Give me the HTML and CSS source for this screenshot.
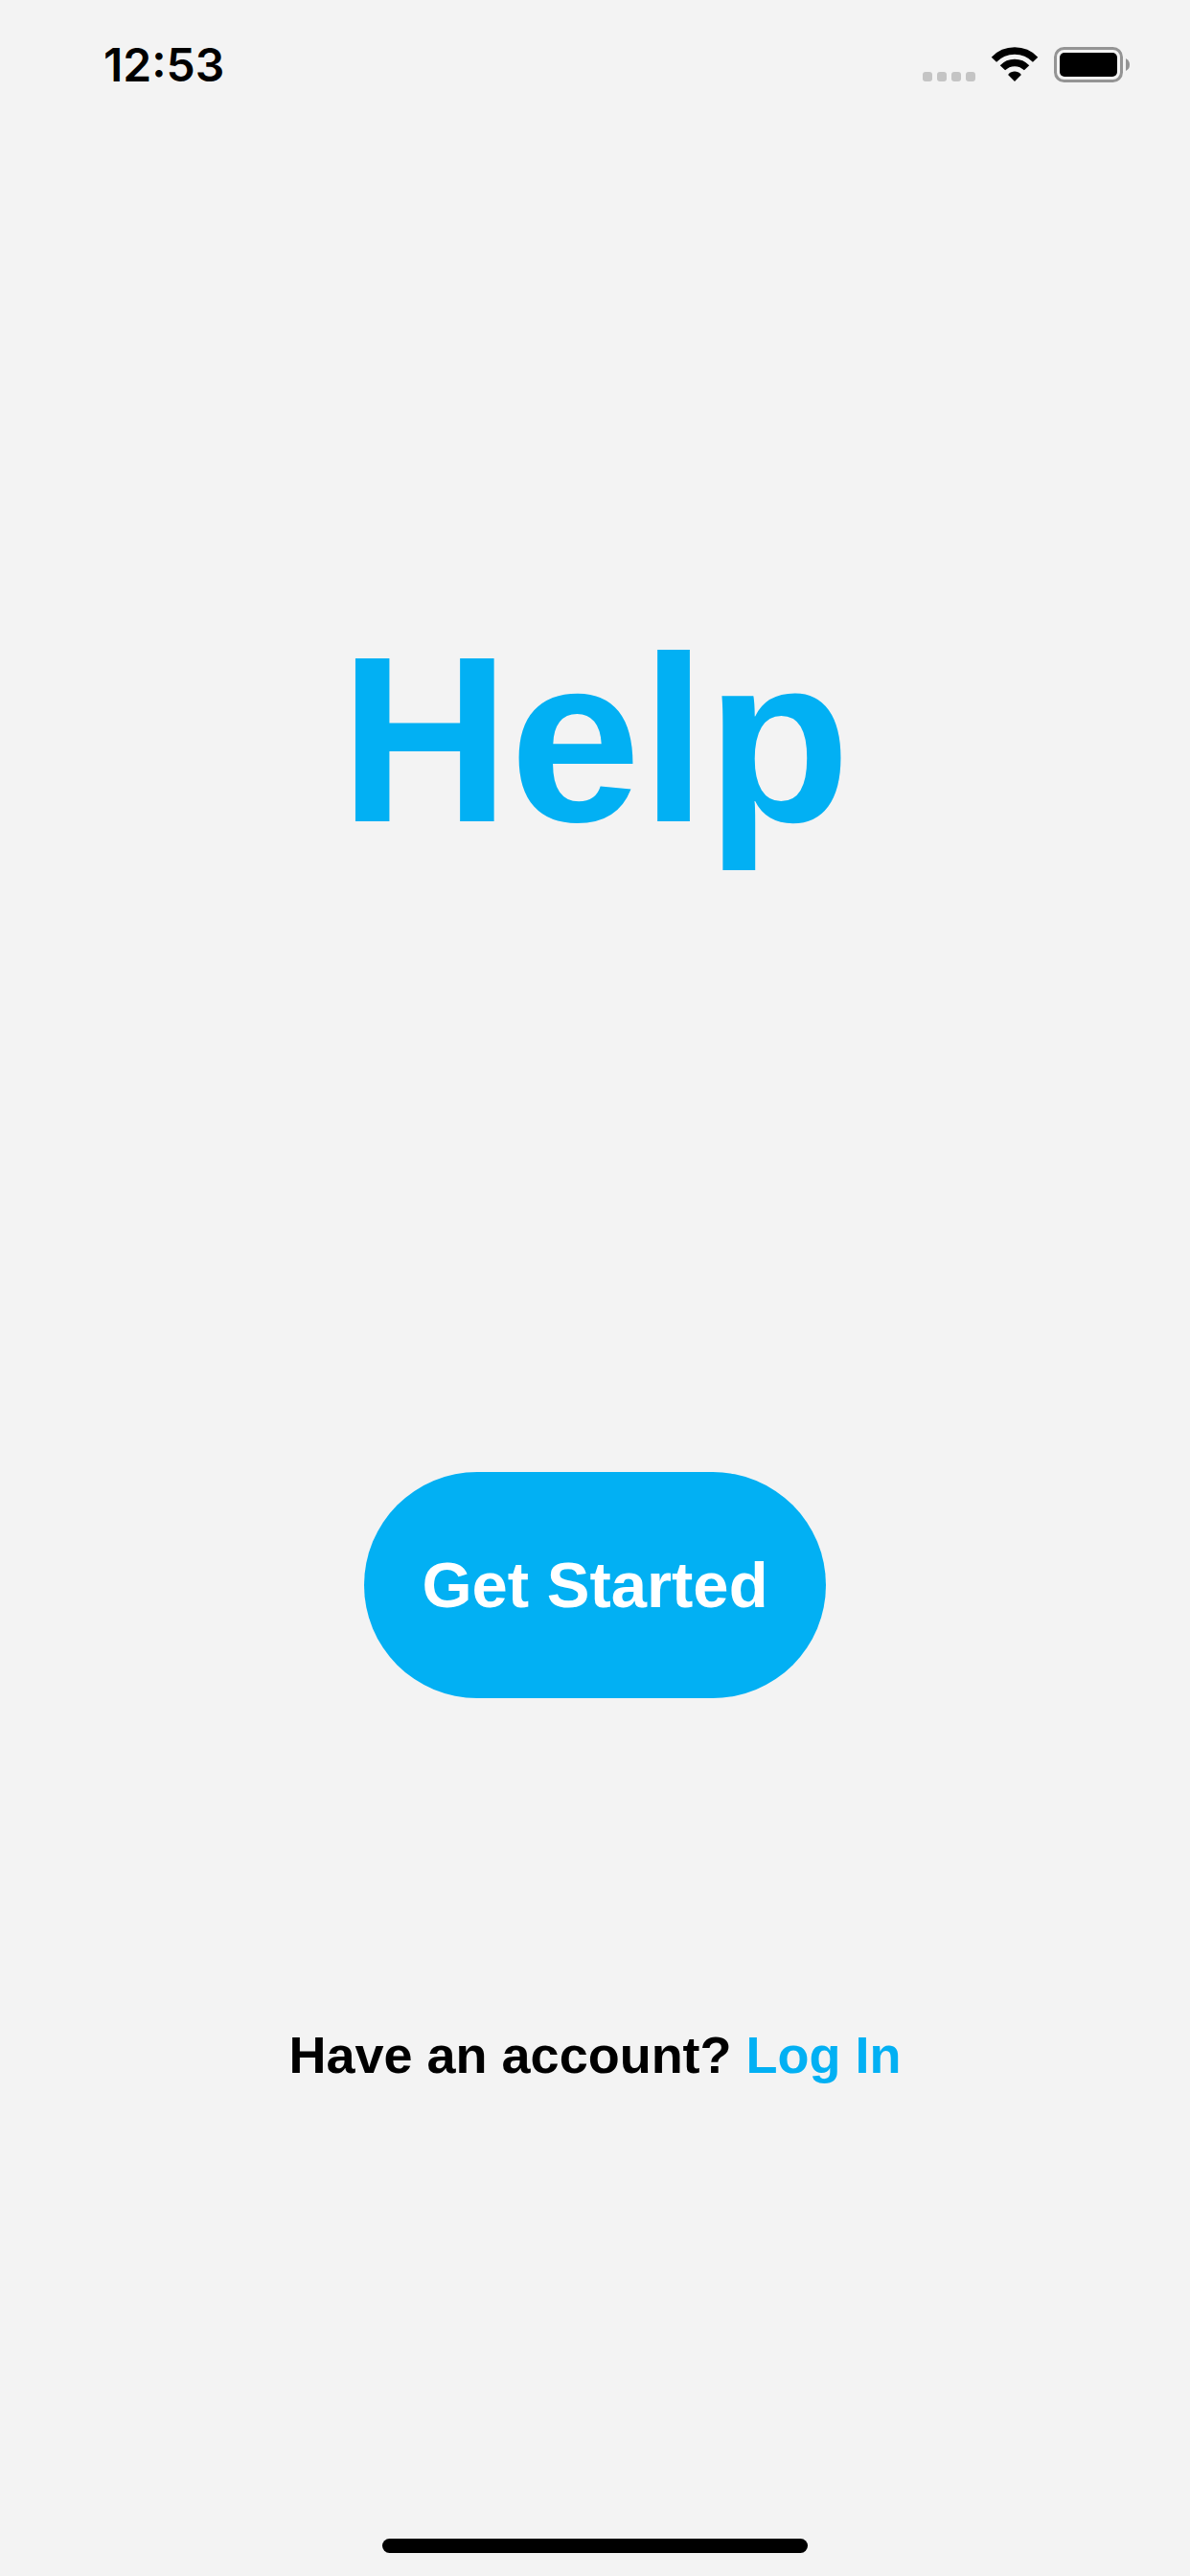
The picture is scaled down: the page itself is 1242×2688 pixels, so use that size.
FILE: index.html
```html
<!DOCTYPE html>
<html lang="en">
<head>
<meta charset="utf-8">
<meta name="viewport" content="width=device-width, initial-scale=1">
<title>Help</title>
<link rel="stylesheet" href="styles.css">
</head>
<body>
<header class="status">
  <time class="clock">12:53</time>
  <div class="indicators">
    <svg class="cell" width="55" height="10" viewBox="0 0 55 10" aria-hidden="true"><rect width="10" height="10" rx="3"/><rect x="15" width="10" height="10" rx="3"/><rect x="30" width="10" height="10" rx="3"/><rect x="45" width="10" height="10" rx="3"/></svg>
    <svg width="50" height="38" viewBox="0 0 50 38" aria-hidden="true"><path d="M3.400 13.200A30 30 0 0 1 46.600 13.200M12.400 21.800A17.500 17.500 0 0 1 37.600 21.800" fill="none" stroke="#000" stroke-width="7.400"/><path d="M25 36L18.300 29.300Q18 28.800 18.500 28.400C22 24.600 28 24.600 31.500 28.400Q32 28.800 31.700 29.300Z"/></svg>
    <svg width="80" height="38" viewBox="0 0 80 38" aria-hidden="true"><rect x="1.500" y="1.500" width="69" height="34" rx="9" fill="none" stroke="#949494" stroke-width="3"/><rect x="6" y="6" width="60" height="25" rx="5"/><path d="M75 12Q79 14 79 18.500T75 25Z" fill="#949494"/></svg>
  </div>
</header>
<main class="welcome">
  <h1 class="title">Help</h1>
  <button class="start" type="button">Get Started</button>
  <p class="account">Have an account? <a class="login" href="#login">Log In</a></p>
</main>
<div class="home-bar"></div>
</body>
</html>
```
FILE: styles.css
```css
* { box-sizing: border-box; }
body { margin: 0; min-height: 100vh; display: flex; flex-direction: column; background: #f3f3f3; color: #000; font-family: "Arial Rounded MT Bold", "Liberation Sans", sans-serif; }
.status { display: flex; justify-content: space-between; align-items: center; height: 136px; padding: 0 62px 0 108px; }
.clock { font: 600 48px/56px Inter, sans-serif; }
.indicators { display: flex; align-items: center; gap: 16px; }
.cell { fill: #c4c4c4; margin-top: 24px; }
.welcome { flex: 1; display: flex; flex-direction: column; align-items: center; }
.title { margin: 492px 0 0; color: #02b0f3; font-size: 246px; font-weight: 700; line-height: 288px; }
.start { margin-top: 620px; height: 236px; padding: 0 60px; border: 0; border-radius: 118px; background: #02b0f3; color: #fff; font: inherit; font-size: 67px; font-weight: 700; line-height: 80px; }
.account { margin: 336px 0 0; font-size: 54px; font-weight: 700; line-height: 72px; }
.login { color: #02b0f3; text-decoration: none; }
.home-bar { align-self: center; width: 444px; max-width: 60%; height: 15px; margin-bottom: 24px; border-radius: 8px; background: #000; }
```
